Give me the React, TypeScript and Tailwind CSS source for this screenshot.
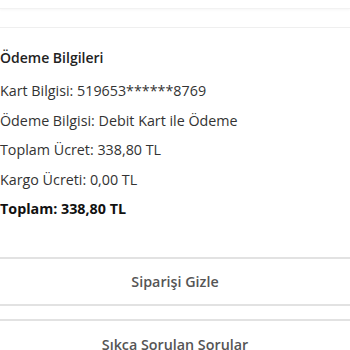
export default function App() {
  const rows = [
    "Kart Bilgisi: 519653******8769",
    "Ödeme Bilgisi: Debit Kart ile Ödeme",
    "Toplam Ücret: 338,80 TL",
    "Kargo Ücreti: 0,00 TL",
  ];

  return (
    <div className="w-[350px] h-[350px] overflow-hidden bg-white font-['Open_Sans',sans-serif] text-[#333]">
      <div className="h-[9px] border-b border-[#f2f2f2] shadow-[0_1px_3px_rgba(0,0,0,0.04)]" />
      <div className="h-[19px] border-b border-[#efefef]" />

      <section className="pt-[19px]">
        <h2 className="text-[14px] leading-[22px] font-semibold text-[#222]">Ödeme Bilgileri</h2>
        <div className="flex flex-col gap-[7.5px] mt-[11px]">
          {rows.map((r) => (
            <p key={r} className="text-[14.3px] leading-[22px]">{r}</p>
          ))}
          <p className="text-[14.3px] leading-[22px] font-bold text-[#111]">Toplam: 338,80 TL</p>
        </div>
      </section>

      <div className="mt-[37px] border-y-2 border-[#e2e2e2] h-[49px] flex items-center justify-center">
        <span className="text-[14.3px] font-semibold text-[#555]">Siparişi Gizle</span>
      </div>
      <div className="mt-[13px] border-t-2 border-[#e2e2e2] pt-[13px] flex justify-center">
        <span className="text-[14.3px] font-semibold text-[#555] leading-[22px]">Sıkca Sorulan Sorular</span>
      </div>
    </div>
  );
}
